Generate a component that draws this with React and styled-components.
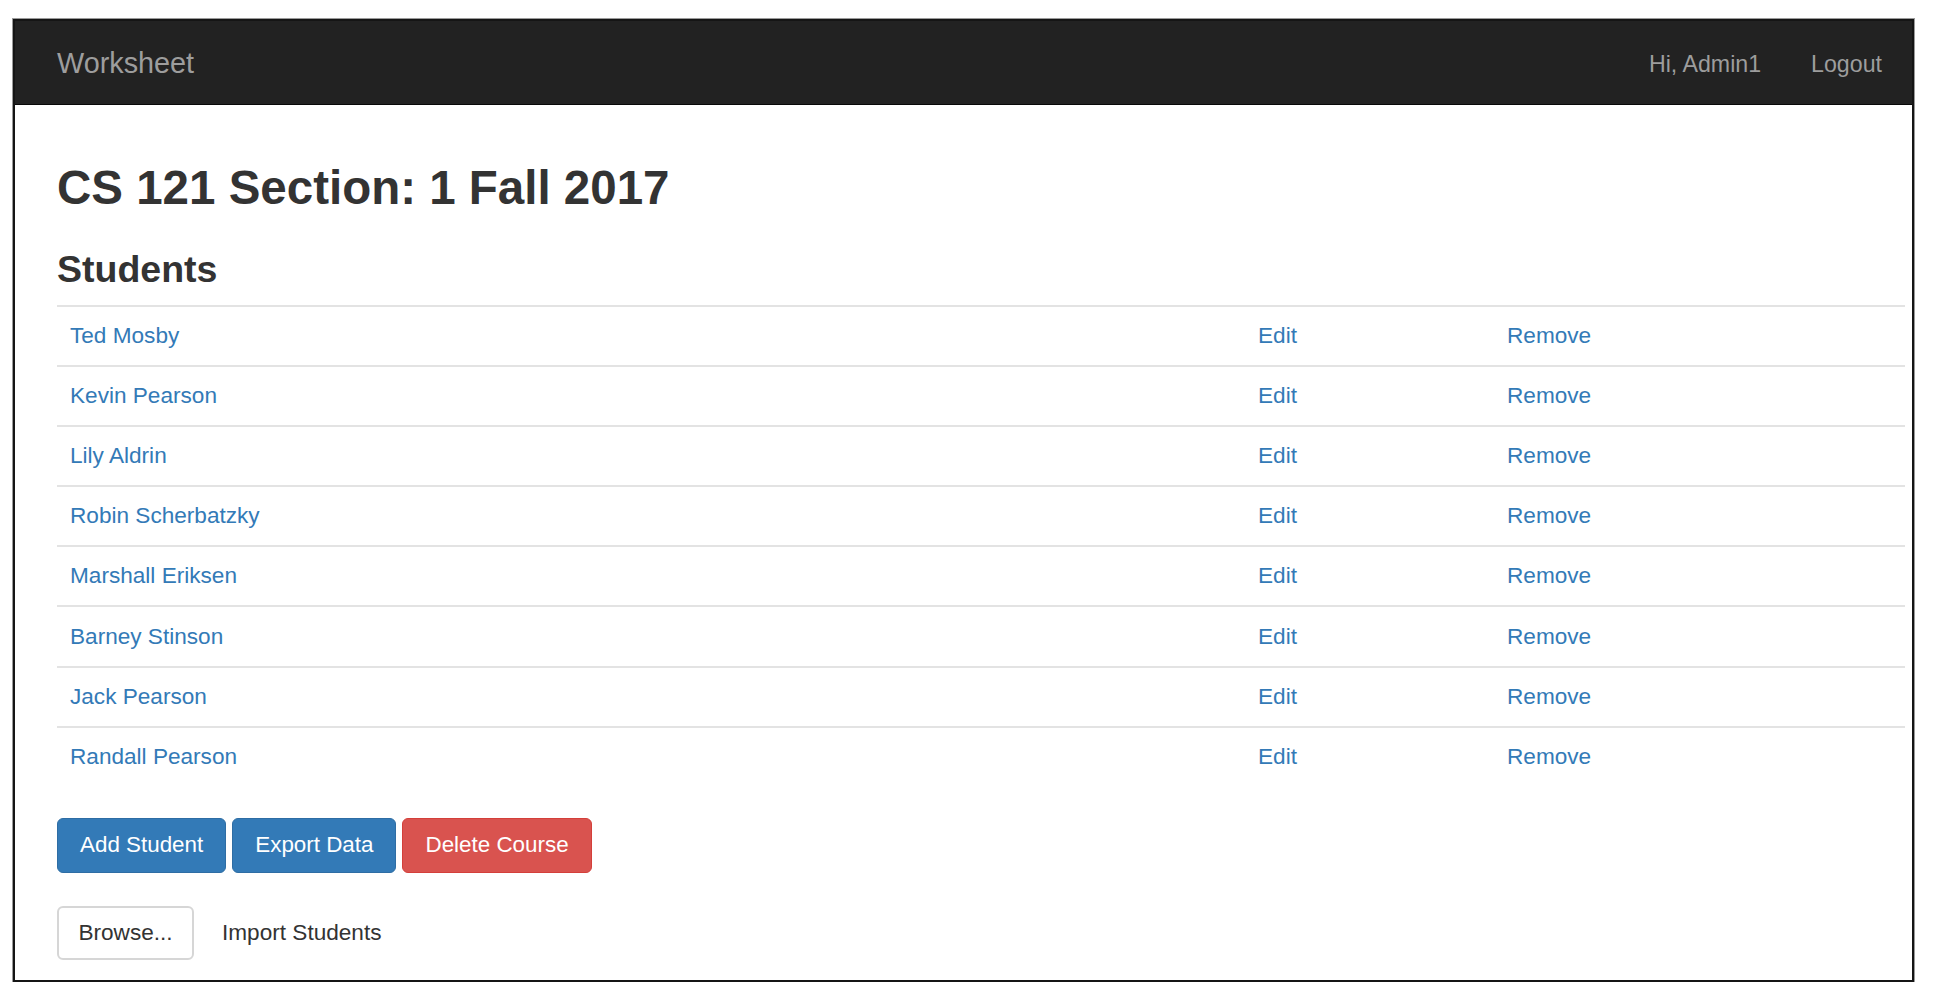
import React from 'react';
import styled, { createGlobalStyle } from 'styled-components';

const GlobalStyle = createGlobalStyle`
  html, body {
    margin: 0;
    padding: 0;
    background: #fff;
  }
  body {
    font-family: "Liberation Sans", Arial, Helvetica, sans-serif;
    color: #333;
  }
  * {
    box-sizing: border-box;
  }
`

const students = [
  'Ted Mosby',
  'Kevin Pearson',
  'Lily Aldrin',
  'Robin Scherbatzky',
  'Marshall Eriksen',
  'Barney Stinson',
  'Jack Pearson',
  'Randall Pearson'
];

const Frame = styled('div')`
  margin: 19px 0 0 13px;
  width: 1901px;
  border: 2px solid #151515;
  box-shadow: 0 0 0 1px #9a9a9a;
  background: #fff;
`

const NavBar = styled('nav')`
  display: flex;
  align-items: center;
  justify-content: space-between;
  height: 84px;
  padding: 0 30px 0 42px;
  background-color: #222;
  border-bottom: 1px solid #080808;
`

const Brand = styled('a')`
  font-size: 28.8px;
  color: #9d9d9d;
  text-decoration: none;
  padding-top: 2px;
`

const NavLinks = styled('div')`
  display: flex;
  align-items: center;
  gap: 50px;
  padding-top: 4px;
`

const NavLink = styled('a')`
  font-size: 23.2px;
  color: #9d9d9d;
  text-decoration: none;
`

const Content = styled('main')`
  padding: 0 7px 20px 42px;
`

const PageTitle = styled('h1')`
  margin: 57px 0 0;
  font-size: 47.5px;
  font-weight: 700;
  line-height: 1.1;
  color: #333;
`

const SectionTitle = styled('h3')`
  margin: 34.5px 0 15px;
  font-size: 37.5px;
  font-weight: 700;
  line-height: 1.1;
  color: #333;
`

const Table = styled('div')`
  display: flex;
  flex-direction: column;
`

const Row = styled('div')`
  display: grid;
  grid-template-columns: 1188px 249px 1fr;
  align-items: center;
  height: 60.1px;
  padding-left: 13px;
  border-top: 2px solid #e3e3e3;
`

const TableLink = styled('a')`
  font-size: 22.6px;
  color: #337ab7;
  text-decoration: none;
  cursor: pointer;
`

const ButtonBar = styled('div')`
  display: flex;
  gap: 6px;
  margin-top: 32px;
`

const Button = styled('button')`
  height: 55px;
  padding: 0 22px;
  font-family: inherit;
  font-size: 22.4px;
  color: #fff;
  background-color: ${props => props.danger ? '#d9534f' : '#337ab7'};
  border: 1.6px solid ${props => props.danger ? '#d43f3a' : '#2e6da4'};
  border-radius: 6px;
  cursor: pointer;
`

const ImportRow = styled('div')`
  display: flex;
  align-items: center;
  gap: 28px;
  margin-top: 33px;
`

const BrowseButton = styled('button')`
  width: 137px;
  height: 54px;
  padding: 0;
  font-family: inherit;
  font-size: 22.6px;
  color: #333;
  background: #fff;
  border: 2px solid #d6d6d6;
  border-radius: 6px;
`

const ImportLabel = styled('span')`
  font-size: 22.6px;
  color: #333;
`

export default function App() {
  return (
    <>
      <GlobalStyle />
      <Frame>
        <NavBar>
          <Brand>Worksheet</Brand>
          <NavLinks>
            <NavLink>Hi, Admin1</NavLink>
            <NavLink>Logout</NavLink>
          </NavLinks>
        </NavBar>
        <Content>
          <PageTitle>CS 121 Section: 1 Fall 2017</PageTitle>
          <SectionTitle>Students</SectionTitle>
          <Table>
            {students.map(name => (
              <Row key={name}>
                <TableLink>{name}</TableLink>
                <TableLink>Edit</TableLink>
                <TableLink>Remove</TableLink>
              </Row>
            ))}
          </Table>
          <ButtonBar>
            <Button>Add Student</Button>
            <Button>Export Data</Button>
            <Button danger>Delete Course</Button>
          </ButtonBar>
          <ImportRow>
            <BrowseButton>Browse...</BrowseButton>
            <ImportLabel>Import Students</ImportLabel>
          </ImportRow>
        </Content>
      </Frame>
    </>
  );
}
